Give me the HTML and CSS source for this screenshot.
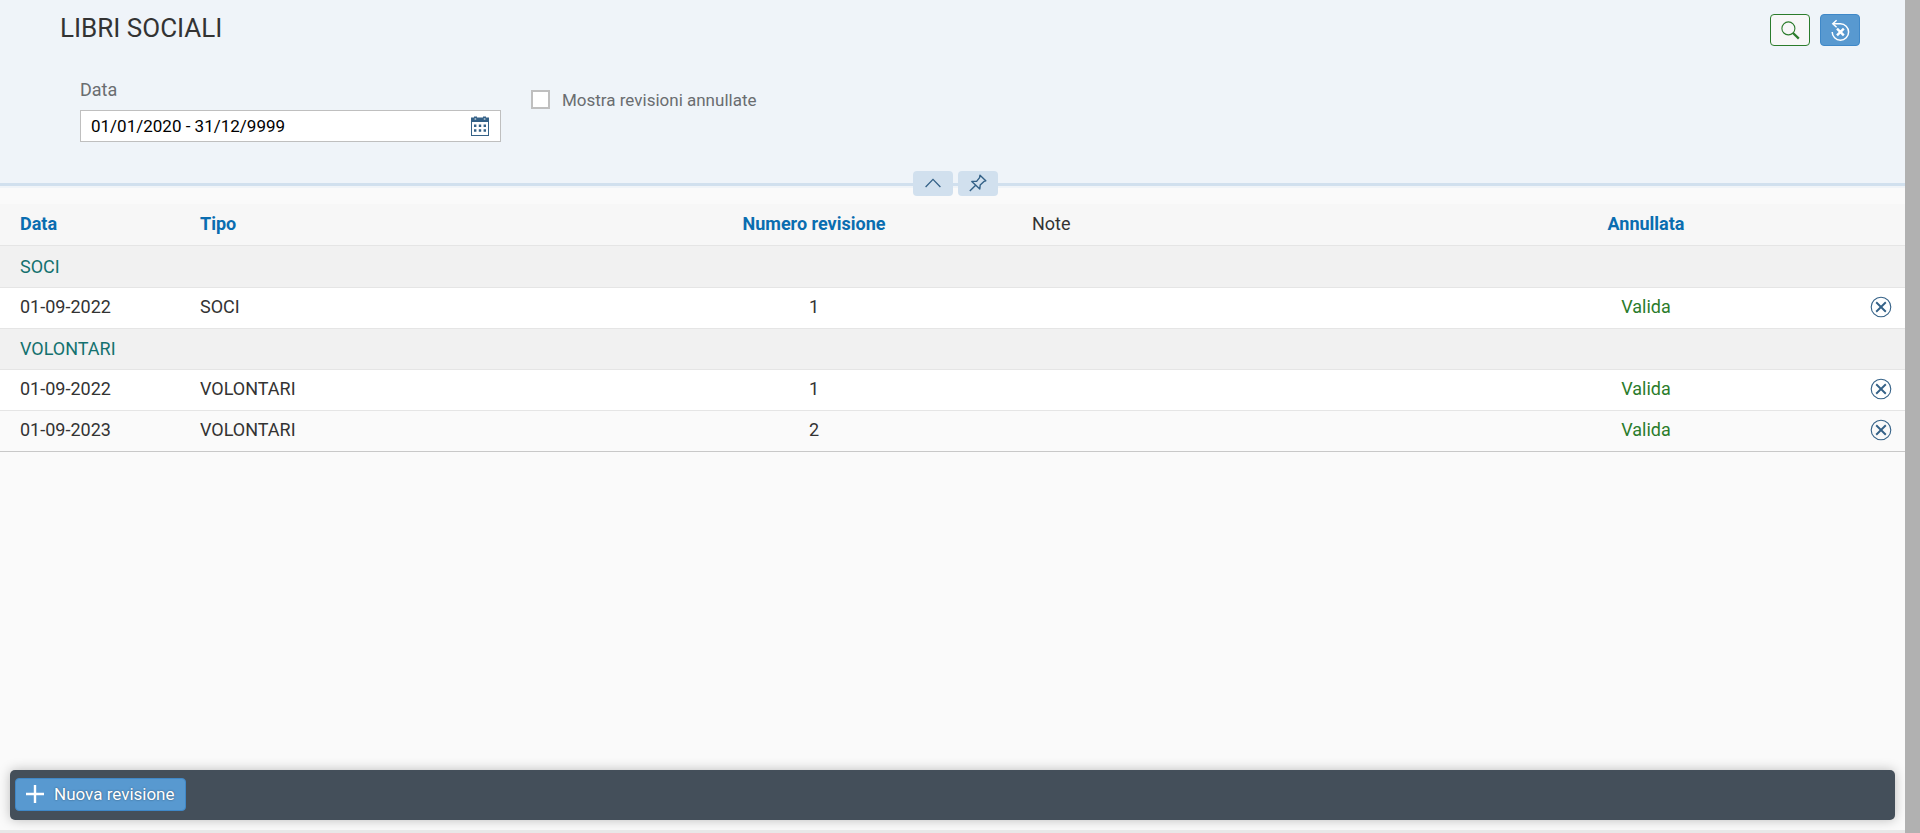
FILE: index.html
```html
<!DOCTYPE html>
<html lang="it">
<head>
<meta charset="utf-8">
<title>Libri sociali</title>
<link rel="stylesheet" href="styles.css">
</head>
<body>
<svg class="sprite" aria-hidden="true">
  <symbol id="i-cancel" viewBox="0 0 22 22">
    <circle cx="11" cy="11" r="9.8" fill="none" stroke="currentColor" stroke-width="1.1"/>
    <path d="M6.2 6.3 15.8 15.7M15.8 6.3 6.2 15.7" fill="none" stroke="currentColor" stroke-width="1.9"/>
  </symbol>
</svg>
<div class="shell">
  <div class="page">
    <header class="header">
      <div class="title-bar">
        <h1 class="title">LIBRI SOCIALI</h1>
        <div class="actions">
          <button class="btn btn-search" type="button" aria-label="Cerca">
            <svg width="20" height="20" viewBox="0 0 20 20" fill="none" stroke="currentColor">
              <circle cx="8.4" cy="8.4" r="6.5" stroke-width="1.1"/>
              <path d="M13 13 18.8 18.6" stroke-width="2.3"/>
            </svg>
          </button>
          <button class="btn btn-blue" type="button" aria-label="Azzera filtri">
            <svg width="20" height="22" viewBox="0 0 20 22" fill="none" stroke="currentColor">
              <path d="M3 4.8H10.4A8.2 8.2 0 1 1 2.2 13" stroke-width="1.5"/>
              <path d="M6.6 1.2 2.8 4.8 6.6 8.3" stroke-width="1.5"/>
              <path d="M7 9.6 13.8 16.4M13.8 9.6 7 16.4" stroke-width="2.4"/>
            </svg>
          </button>
        </div>
      </div>
      <form class="filters">
        <div class="field">
          <label class="label" for="data">Data</label>
          <div class="input-box">
            <input class="input" id="data" type="text" value="01/01/2020 - 31/12/9999">
            <button class="picker" type="button" aria-label="Apri calendario">
              <svg width="18" height="20" viewBox="0 0 18 20" fill="currentColor">
                <path d="M0 1.5H3V.5H6V1.5H12V.5H15V1.5H18V20H0ZM1 6V19H17V6Z" fill-rule="evenodd"/>
                <path d="M3.6 2.4H5.2V3.6H3.6ZM12.8 2.4H14.4V3.6H12.8Z" fill="#fff"/>
                <path d="M3 8.5H5.4V10.9H3ZM7.8 8.5H10.2V10.9H7.8ZM12.6 8.5H15V10.9H12.6ZM3 13.3H5.4V15.7H3ZM7.8 13.3H10.2V15.7H7.8ZM12.6 13.3H15V15.7H12.6Z"/>
              </svg>
            </button>
          </div>
        </div>
        <label class="check"><input class="checkbox" type="checkbox">Mostra revisioni annullate</label>
      </form>
      <div class="toggles">
        <button class="toggle" type="button" aria-label="Comprimi intestazione">
          <svg width="16" height="10" viewBox="0 0 16 10" fill="none" stroke="currentColor" stroke-width="1.3"><path d="M.6 9 8 1.4 15.4 9"/></svg>
        </button>
        <button class="toggle" type="button" aria-label="Fissa intestazione">
          <svg width="18" height="18" viewBox="0 0 18 18" fill="none" stroke="currentColor" stroke-width="1.4" stroke-linejoin="round"><path d="M.8 17 6.4 11.4M11 1.2 16.8 6.8 15 7.4 11.2 11 10.8 15 2.8 7.4 7.6 7.4 10.6 3.6Z"/></svg>
        </button>
      </div>
    </header>
    <main class="content">
      <table class="table">
        <colgroup><col class="col-date"><col><col><col><col><col class="col-action"></colgroup>
        <thead>
          <tr><th class="sortable">Data</th><th class="sortable">Tipo</th><th class="sortable center">Numero revisione</th><th>Note</th><th class="sortable center">Annullata</th><th></th></tr>
        </thead>
        <tbody>
          <tr class="group"><td colspan="6">SOCI</td></tr>
          <tr><td>01-09-2022</td><td>SOCI</td><td class="center">1</td><td></td><td class="center valid">Valida</td><td><button class="icon-btn" type="button" aria-label="Annulla"><svg width="22" height="22"><use href="#i-cancel"/></svg></button></td></tr>
          <tr class="group"><td colspan="6">VOLONTARI</td></tr>
          <tr><td>01-09-2022</td><td>VOLONTARI</td><td class="center">1</td><td></td><td class="center valid">Valida</td><td><button class="icon-btn" type="button" aria-label="Annulla"><svg width="22" height="22"><use href="#i-cancel"/></svg></button></td></tr>
          <tr class="alt"><td>01-09-2023</td><td>VOLONTARI</td><td class="center">2</td><td></td><td class="center valid">Valida</td><td><button class="icon-btn" type="button" aria-label="Annulla"><svg width="22" height="22"><use href="#i-cancel"/></svg></button></td></tr>
        </tbody>
      </table>
    </main>
    <footer class="footer">
      <button class="btn btn-blue btn-new" type="button">
        <svg width="18" height="18" viewBox="0 0 18 18" fill="currentColor"><path d="M7.8 0H10.2V7.8H18V10.2H10.2V18H7.8V10.2H0V7.8H7.8Z"/></svg>
        Nuova revisione
      </button>
    </footer>
    <div class="bottom-edge"></div>
  </div>
  <div class="scroll-track"></div>
</div>
</body>
</html>
```
FILE: styles.css
```css
* {
  box-sizing: border-box;
}

body {
  margin: 0;
  font-family: Roboto, "Liberation Sans", sans-serif;
  font-size: 18px;
  line-height: 20px;
  color: #333;
}

button,
input {
  font: inherit;
}

svg {
  display: block;
}

.sprite {
  position: absolute;
  width: 0;
  height: 0;
}

.shell {
  display: grid;
  grid-template-columns: 1fr 15px;
  min-height: 100vh;
}

.page {
  display: flex;
  flex-direction: column;
  background: #fafafa;
}

.scroll-track {
  background: #b1b1b1;
}

.header {
  position: relative;
  padding: 14px 45px 41px 60px;
  background: #eff4f9;
  border-bottom: 3px solid #d1e0ee;
  box-shadow: 0 2px 0 #f0f4f8;
}

.title-bar {
  display: flex;
  justify-content: space-between;
  align-items: flex-start;
  height: 32px;
}

.title {
  margin: 0;
  font-size: 26px;
  line-height: 28px;
  font-weight: 400;
}

.actions {
  display: flex;
  gap: 10px;
}

.btn {
  display: flex;
  align-items: center;
  justify-content: center;
  width: 40px;
  height: 32px;
  padding: 0;
  border: 1px solid;
  border-radius: 4px;
}

.btn-search {
  color: #2b7c2b;
  background: #f7f7f7;
  border-color: #2b7c2b;
}

.btn-blue {
  color: #fff;
  background: #5899d0;
  border-color: #3f88c8;
  text-shadow: 0 0 2px rgba(0, 0, 0, 0.5);
}

.filters {
  display: flex;
  gap: 30px;
  padding: 34px 20px 0;
}

.field {
  width: 421px;
}

.label {
  display: block;
  margin-bottom: 10px;
  color: #6a6d70;
}

.input-box {
  display: flex;
  align-items: center;
  height: 32px;
  padding: 0 11px 0 10px;
  background: #fff;
  border: 1px solid #bfbfbf;
}

.input {
  flex: 1;
  min-width: 0;
  padding: 0;
  font-size: 17px;
  color: #000;
  background: none;
  border: 0;
}

.picker,
.icon-btn {
  padding: 0;
  color: #346187;
  background: none;
  border: 0;
}

.check {
  display: flex;
  align-items: flex-start;
  gap: 12px;
  height: 20px;
  margin-top: 10px;
  font-size: 17px;
  color: #6a6d70;
}

.checkbox {
  appearance: none;
  width: 19px;
  height: 19px;
  margin: 0;
  background: #fff;
  border: 2px solid #bfbfbf;
}

.toggles {
  position: absolute;
  right: 0;
  bottom: -13px;
  left: 0;
  display: flex;
  justify-content: center;
  gap: 5px;
  padding-left: 6px;
}

.toggle {
  display: flex;
  align-items: center;
  justify-content: center;
  width: 40px;
  height: 25px;
  padding: 0 0 2px;
  color: #346187;
  background: #d1e0ee;
  border: 0;
  border-radius: 4px;
}

.content {
  flex: 1;
  padding-top: 18px;
}

.table {
  width: 100%;
  table-layout: fixed;
  border-collapse: separate;
  border-spacing: 0;
}

.col-date {
  width: 190px;
}

.col-action {
  width: 51px;
}

.table th,
.table td {
  height: 41px;
  padding: 0 10px 2px;
  font-weight: 400;
  text-align: left;
  background: #fff;
  border-bottom: 1px solid #e5e5e5;
}

.table th {
  height: 42px;
  background: #f7f7f7;
}

.table th:first-child,
.table td:first-child {
  padding-left: 20px;
}

.table .sortable {
  font-weight: 700;
  color: #0a6db0;
}

.table .center {
  text-align: center;
}

.table .valid {
  color: #2b7c2b;
}

.table .group td {
  padding-bottom: 0;
  color: #14716f;
  background: #f1f1f1;
}

.table thead + tbody tr:first-child td {
  height: 42px;
}

.table .alt td {
  background: #fafafa;
}

.table tbody tr:last-child td {
  border-bottom-color: #c8c8c8;
}

.icon-btn {
  display: block;
  margin-left: 6px;
}

.table td:last-child:not(:first-child) {
  padding: 0 0 2px 10px;
}

.footer {
  display: flex;
  align-items: flex-start;
  height: 50px;
  margin: 0 10px 10px;
  padding: 8px 5px;
  background: #444f5a;
  border-radius: 5px;
  box-shadow: 0 0 12px rgba(0, 0, 0, 0.25);
}

.btn-new {
  gap: 10px;
  width: auto;
  height: 33px;
  padding: 0 10px 1px;
  font-size: 17px;
}

.bottom-edge {
  height: 3px;
  background: #e8e8e8;
}
```
